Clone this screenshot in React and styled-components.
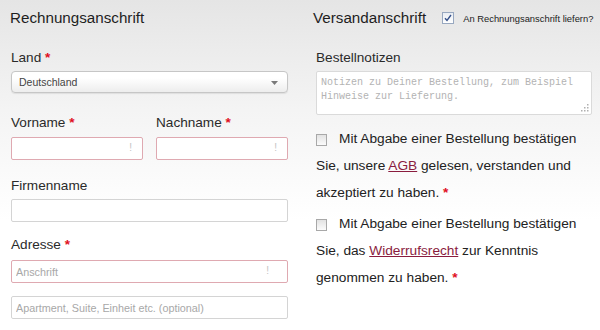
import React from 'react';
import styled, { createGlobalStyle } from 'styled-components';

const Global = createGlobalStyle`
  html, body { margin: 0; padding: 0; }
  body {
    width: 600px;
    height: 330px;
    overflow: hidden;
    background: linear-gradient(#e5e5e5 0px, #f4f4f4 110px, #ffffff 220px);
    font-family: "Liberation Sans", Arial, sans-serif;
    color: #222;
  }
`;

const Page = styled.div`
  display: grid;
  grid-template-columns: 277px 279px;
  column-gap: 25px;
  padding-left: 11px;
  box-sizing: border-box;
  height: 330px;
`;

const Column = styled.div`
  display: flex;
  flex-direction: column;
  min-width: 0;
`;

const HeaderRow = styled.div`
  display: flex;
  align-items: center;
  height: 20px;
  margin-top: 8px;
  margin-left: ${p => p.$shift || 0}px;
  white-space: nowrap;
`;

const Heading = styled.h2`
  margin: 0;
  flex: none;
  font-size: 15.2px;
  line-height: 20px;
  font-weight: normal;
  color: #1e1e1e;
`;

const Field = styled.div`
  display: flex;
  flex-direction: column;
  gap: ${p => p.$gap ?? 4}px;
  margin-top: ${p => p.$mt || 0}px;
  padding-left: ${p => p.$indent || 0}px;
`;

const Label = styled.label`
  font-size: 13.6px;
  line-height: 18px;
  color: #2a2a2a;
`;

const Req = styled.span`
  color: #e0101e;
  font-weight: bold;
`;

const SelectBox = styled.div`
  position: relative;
  height: 22px;
  box-sizing: border-box;
  border: 1px solid #c6c6c6;
  border-radius: 4px;
  background: linear-gradient(#ffffff 30%, #ededed);
  box-shadow: 0 1px 1px rgba(0, 0, 0, 0.08);
  display: flex;
  align-items: center;
  padding-left: 7px;
  font-size: 10.5px;
  color: #444;
`;

const Arrow = styled.svg`
  position: absolute;
  right: 9px;
  top: 9px;
`;

const NameRow = styled.div`
  display: grid;
  grid-template-columns: 132px 132px;
  column-gap: 13px;
  margin-top: 21px;
`;

const InputWrap = styled.div`
  position: relative;
  margin-top: ${p => p.$mt || 0}px;
`;

const Input = styled.input`
  display: block;
  width: 100%;
  height: 23px;
  box-sizing: border-box;
  border: 1px solid ${p => (p.$invalid ? '#dfa9b1' : '#d4d4d4')};
  border-radius: 2px;
  background: #fff;
  padding: 0 4px;
  font-family: "Liberation Sans", Arial, sans-serif;
  font-size: 10.8px;
  color: #333;
  outline: none;
  &::placeholder { color: #a8a8a8; }
`;

const Bang = styled.span`
  position: absolute;
  right: ${p => p.$right}px;
  top: 5px;
  font-size: 10px;
  line-height: 12px;
  color: #c4c4c4;
`;

const CheckedBox = styled.span`
  display: inline-flex;
  flex: none;
  align-items: center;
  justify-content: center;
  width: 12px;
  height: 12px;
  box-sizing: border-box;
  margin-left: 16px;
  border: 1px solid #98a8c0;
  background: linear-gradient(#e9edf3, #ffffff);
`;

const SmallLabel = styled.span`
  flex: none;
  margin-left: 9px;
  font-size: 9.4px;
  color: #222;
`;

const AreaWrap = styled.div`
  position: relative;
`;

const Area = styled.textarea`
  display: block;
  width: 276px;
  height: 44px;
  box-sizing: border-box;
  border: 1px solid #dadada;
  border-radius: 2px;
  background: #fff;
  padding: 4px 4px;
  font-family: "Liberation Mono", "Courier New", monospace;
  font-size: 10px;
  line-height: 14px;
  resize: none;
  outline: none;
  &::placeholder { color: #b3b3b3; }
`;

const Grip = styled.svg`
  position: absolute;
  right: 3px;
  bottom: 3px;
`;

const Consent = styled.p`
  margin: ${p => p.$mt}px 0 0 3px;
  font-size: 13.7px;
  line-height: 27px;
  color: #222;
`;

const Box = styled.span`
  display: inline-block;
  width: 11px;
  height: 12px;
  box-sizing: border-box;
  margin-right: 12px;
  vertical-align: -3px;
  border: 1px solid #a8a8a8;
  background: linear-gradient(#e2e2e2, #fbfbfb);
`;

const Link = styled.a`
  color: #8a1c3e;
  text-decoration: underline;
`;

function TextInput({ invalid, placeholder, bangRight, mt }) {
  return (
    <InputWrap $mt={mt}>
      <Input $invalid={invalid} placeholder={placeholder} />
      {invalid && <Bang $right={bangRight}>!</Bang>}
    </InputWrap>
  );
}

export default function App() {
  return (
    <>
      <Global />
      <Page>
        <Column>
          <HeaderRow $shift={-1}>
            <Heading>Rechnungsanschrift</Heading>
          </HeaderRow>

          <Field $mt={21}>
            <Label>Land <Req>*</Req></Label>
            <SelectBox>
              Deutschland
              <Arrow width="7" height="4" viewBox="0 0 7 4">
                <path d="M0 0 L7 0 L3.5 4 Z" fill="#7a7a7a" />
              </Arrow>
            </SelectBox>
          </Field>

          <NameRow>
            <Field $gap={5}>
              <Label>Vorname <Req>*</Req></Label>
              <TextInput invalid bangRight={11} />
            </Field>
            <Field $gap={5}>
              <Label>Nachname <Req>*</Req></Label>
              <TextInput invalid bangRight={11} />
            </Field>
          </NameRow>

          <Field $mt={17}>
            <Label>Firmenname</Label>
            <TextInput />
          </Field>

          <Field $mt={14} $gap={6}>
            <Label>Adresse <Req>*</Req></Label>
            <TextInput invalid placeholder="Anschrift" bangRight={19} />
          </Field>
          <TextInput placeholder="Apartment, Suite, Einheit etc. (optional)" mt={13} />
        </Column>

        <Column>
          <HeaderRow>
            <Heading>Versandanschrift</Heading>
            <CheckedBox>
              <svg width="8" height="8" viewBox="0 0 8 8">
                <path d="M1 4.2 L3 6.5 L7 1" fill="none" stroke="#35508a" strokeWidth="1.4" />
              </svg>
            </CheckedBox>
            <SmallLabel>An Rechnungsanschrift liefern?</SmallLabel>
          </HeaderRow>

          <Field $mt={21} $indent={3}>
            <Label>Bestellnotizen</Label>
            <AreaWrap>
              <Area placeholder="Notizen zu Deiner Bestellung, zum Beispiel Hinweise zur Lieferung." />
              <Grip width="8" height="8" viewBox="0 0 8 8">
                <g fill="#b0b0b0">
                  <rect x="6" y="0" width="1.5" height="1.5" />
                  <rect x="3" y="3" width="1.5" height="1.5" />
                  <rect x="6" y="3" width="1.5" height="1.5" />
                  <rect x="0" y="6" width="1.5" height="1.5" />
                  <rect x="3" y="6" width="1.5" height="1.5" />
                  <rect x="6" y="6" width="1.5" height="1.5" />
                </g>
              </Grip>
            </AreaWrap>
          </Field>

          <Consent $mt={10}>
            <Box />Mit Abgabe einer Bestellung bestätigen Sie, unsere <Link href="#">AGB</Link> gelesen, verstanden und akzeptiert zu haben. <Req>*</Req>
          </Consent>
          <Consent $mt={4}>
            <Box />Mit Abgabe einer Bestellung bestätigen Sie, das <Link href="#">Widerrufsrecht</Link> zur Kenntnis genommen zu haben. <Req>*</Req>
          </Consent>
        </Column>
      </Page>
    </>
  );
}
